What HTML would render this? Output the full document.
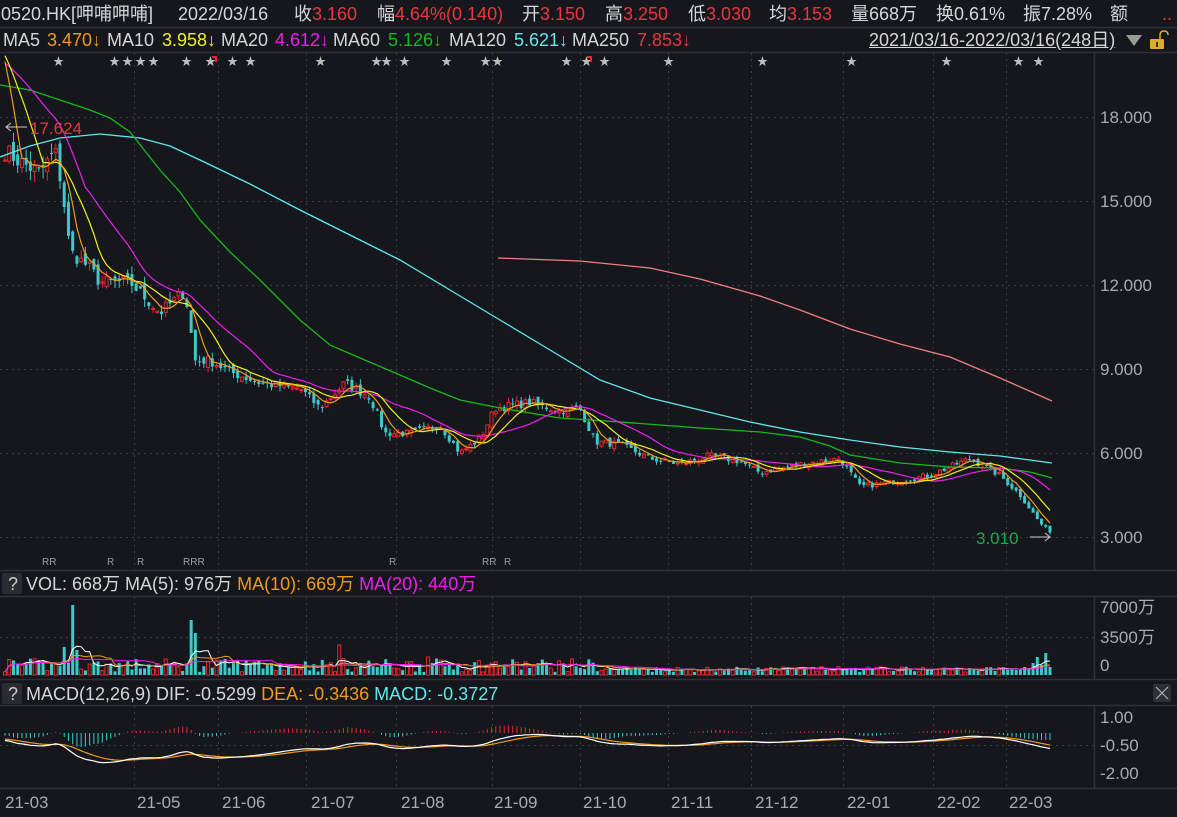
<!DOCTYPE html>
<html><head><meta charset="utf-8"><style>
body{margin:0;background:#15171c;width:1177px;height:817px;overflow:hidden;font-family:"Liberation Sans","Noto Sans CJK SC",sans-serif;}
.t{position:absolute;font-size:18px;color:#d6d6d6;white-space:nowrap;line-height:22px}
.r{color:#e8383d}
svg{position:absolute;left:0;top:0}
</style></head><body>
<svg id="s" width="1177" height="817" xmlns="http://www.w3.org/2000/svg">
<g stroke="#2e3138" stroke-width="1.5" fill="none">
<line x1="0" y1="27.5" x2="1177" y2="27.5"/>
<line x1="0" y1="52.5" x2="1177" y2="52.5"/>
<line x1="0" y1="570.5" x2="1177" y2="570.5"/>
<line x1="0" y1="596.5" x2="1177" y2="596.5"/>
<line x1="0" y1="679.5" x2="1177" y2="679.5"/>
<line x1="0" y1="705.5" x2="1177" y2="705.5"/>
<line x1="0" y1="788.5" x2="1177" y2="788.5"/>
<line x1="1094.5" y1="52" x2="1094.5" y2="570"/>
<line x1="1094.5" y1="596" x2="1094.5" y2="679"/>
<line x1="1094.5" y1="705" x2="1094.5" y2="788"/>
</g>
<g id="grid" stroke="#3a3d45" stroke-width="1" stroke-dasharray="2,4"></g>
<g id="cs"></g>
<g fill="none" stroke-width="1.3">
<polyline stroke="#f08080" points="498,258 580,261 650,268 700,279 760,296 800,310 850,329 900,344 950,357 1000,378 1052,401"/>
<polyline stroke="#5fe8ec" points="0,157 30,146 60,138 100,134 140,138 170,146 200,160 250,184 300,210 350,235 400,260 450,290 500,320 550,350 600,380 650,398 700,410 750,422 800,432 850,440 900,447 950,452 1000,456 1052,463"/>
<polyline stroke="#19b81c" points="0,85 30,90 60,100 90,110 110,118 130,132 160,170 180,192 200,220 230,252 260,280 300,320 330,345 360,358 400,375 430,388 460,400 500,408 560,418 620,422 700,428 760,432 800,437 830,446 850,455 900,463 950,467 1000,468 1030,472 1052,478"/>
</g>
<g id="ma"></g>
<line x1="6" y1="127" x2="27" y2="127" stroke="#ccc"/><path d="M11,123 L6,127 L11,131" stroke="#ccc" fill="none"/>
<text x="30" y="134" fill="#e8383d" font-size="17" font-family="Liberation Sans">17.624</text>
<text x="976" y="544" fill="#1fa84a" font-size="17" font-family="Liberation Sans">3.010</text>
<line x1="1030" y1="537" x2="1050" y2="537" stroke="#ccc"/><path d="M1045,533 L1050,537 L1045,541" stroke="#ccc" fill="none"/>
<g fill="#a9abb2" font-size="17" font-family="Liberation Sans">
<text x="1100" y="123">18.000</text><text x="1100" y="207">15.000</text><text x="1100" y="291">12.000</text><text x="1100" y="375">9.000</text><text x="1100" y="459">6.000</text><text x="1100" y="543">3.000</text>
<text x="1100" y="613">7000万</text><text x="1100" y="643">3500万</text><text x="1100" y="671">0</text>
<text x="1100" y="723">1.00</text><text x="1100" y="751">-0.50</text><text x="1100" y="779">-2.00</text>
<text x="5" y="808">21-03</text><text x="137" y="808">21-05</text><text x="222" y="808">21-06</text><text x="311" y="808">21-07</text><text x="401" y="808">21-08</text><text x="494" y="808">21-09</text><text x="583" y="808">21-10</text><text x="671" y="808">21-11</text><text x="755" y="808">21-12</text><text x="847" y="808">22-01</text><text x="937" y="808">22-02</text><text x="1009" y="808">22-03</text>
</g>
<g id="stars" fill="#bdbdbd" font-size="11"></g>
<g fill="#9a9ca3" font-size="10" font-family="Liberation Sans">
<text x="42" y="565">RR</text><text x="107" y="565">R</text><text x="137" y="565">R</text><text x="183" y="565">RRR</text><text x="389" y="565">R</text><text x="482" y="565">RR</text><text x="504" y="565">R</text></g>
<rect x="2" y="573" width="20" height="21" rx="2" fill="#2a2c33"/>
<rect x="2" y="683" width="20" height="21" rx="2" fill="#2a2c33"/>
<rect x="1153" y="684" width="18" height="18" rx="2" fill="#2e3037"/>
<path d="M1156,687 L1168,699 M1168,687 L1156,699" stroke="#bbb" stroke-width="1"/>
<path d="M1126,35 L1142,35 L1134,46 Z" fill="#9a9a9a"/>
<rect x="1150" y="39" width="14" height="10" rx="1" fill="#e0a92a"/>
<path d="M1160,39 L1160,35 Q1160,31 1164,31 Q1168,31 1168,35" stroke="#e0a92a" stroke-width="1.5" fill="none"/>
<rect x="1156" y="42" width="2" height="5" fill="#333"/>
</svg>
<div class="t" style="left:1px;top:3px">0520.HK[呷哺呷哺]</div>
<div class="t" style="left:178px;top:3px">2022/03/16</div>
<div class="t" style="left:294px;top:3px">收<span class="r">3.160</span></div>
<div class="t" style="left:377px;top:3px">幅<span class="r">4.64%(0.140)</span></div>
<div class="t" style="left:522px;top:3px">开<span class="r">3.150</span></div>
<div class="t" style="left:605px;top:3px">高<span class="r">3.250</span></div>
<div class="t" style="left:688px;top:3px">低<span class="r">3.030</span></div>
<div class="t" style="left:769px;top:3px">均<span class="r">3.153</span></div>
<div class="t" style="left:851px;top:3px">量668万</div>
<div class="t" style="left:936px;top:3px">换0.61%</div>
<div class="t" style="left:1023px;top:3px">振7.28%</div>
<div class="t" style="left:1110px;top:3px">额</div>
<div class="t" style="left:1162px;top:3px;color:#e8383d">..</div>
<div class="t" style="left:3px;top:29px">MA5</div><div class="t" style="left:47px;top:29px;color:#f29a1a">3.470↓</div>
<div class="t" style="left:107px;top:29px">MA10</div><div class="t" style="left:162px;top:29px;color:#f2f21a">3.958↓</div>
<div class="t" style="left:221px;top:29px">MA20</div><div class="t" style="left:275px;top:29px;color:#f01ef0">4.612↓</div>
<div class="t" style="left:333px;top:29px">MA60</div><div class="t" style="left:388px;top:29px;color:#19b81c">5.126↓</div>
<div class="t" style="left:449px;top:29px">MA120</div><div class="t" style="left:514px;top:29px;color:#5fe8ec">5.621↓</div>
<div class="t" style="left:572px;top:29px">MA250</div><div class="t" style="left:637px;top:29px" ><span class="r">7.853↓</span></div>
<div class="t" style="left:869px;top:29px;text-decoration:underline">2021/03/16-2022/03/16(248日)</div>
<div class="t" style="left:8px;top:573px;color:#ccc">?</div>
<div class="t" style="left:26px;top:573px">VOL: 668万 MA(5): 976万 <span style="color:#f29a1a">MA(10): 669万</span> <span style="color:#f01ef0">MA(20): 440万</span></div>
<div class="t" style="left:8px;top:683px;color:#ccc">?</div>
<div class="t" style="left:26px;top:683px">MACD(12,26,9) DIF: -0.5299 <span style="color:#f29a1a">DEA: -0.3436</span> <span style="color:#5fe8ec">MACD: -0.3727</span></div>
<script>
var NS="http://www.w3.org/2000/svg";
function el(p,t,a){var e=document.createElementNS(NS,t);for(var k in a)e.setAttribute(k,a[k]);p.appendChild(e);return e;}
var g=document.getElementById('grid');
[117,201,285,369,453,537].forEach(function(y){el(g,'line',{x1:0,y1:y+.5,x2:1094,y2:y+.5});});
el(g,'line',{x1:0,y1:637.5,x2:1094,y2:637.5});el(g,'line',{x1:0,y1:745.5,x2:1094,y2:745.5});
[134,218,306,396,492,580,668,751,843,933,1006].forEach(function(x){[[53,570],[597,679],[706,788]].forEach(function(r){el(g,'line',{x1:x+.5,y1:r[0],x2:x+.5,y2:r[1]});});});
var seed=7;function rnd(){seed=(seed*16807)%2147483647;return seed/2147483647;}
var kp=[[5,16.8],[20,16.4],[40,16.0],[55,16.8],[62,15.5],[70,13.2],[90,12.6],[100,12.1],[130,12.1],[160,11.0],[185,11.8],[195,9.3],[210,9.3],[230,8.9],[260,8.5],[300,8.3],[320,7.6],[345,8.5],[370,8.0],[385,6.7],[410,6.7],[440,7.0],[460,6.0],[480,6.5],[495,7.6],[530,7.8],[560,7.5],[580,7.6],[595,6.4],[620,6.3],[650,5.8],[680,5.6],[710,5.9],[740,5.7],[760,5.3],[800,5.6],[840,5.8],[860,4.8],[900,5.0],[930,5.2],[970,5.8],[1000,5.2],[1020,4.5],[1040,3.5],[1050,3.16]];
function at(x){for(var i=1;i<kp.length;i++){if(x<=kp[i][0]){var a=kp[i-1],b=kp[i];return a[1]+(b[1]-a[1])*(x-a[0])/(b[0]-a[0]);}}return kp[kp.length-1][1];}
var N=248,cl=[],xs=[];
var pre=[];for(var i=0;i<40;i++)pre.push(21-i*0.1);
for(var i=0;i<N;i++){var x=5+i*(1045/247);xs.push(x);var p=at(x);cl.push(p*(1+(rnd()-.5)*0.04));}
cl[N-1]=3.16;
function Y(p){return 537-(p-3)*28;}
var cs=document.getElementById('cs');
var vols=[];
for(var i=0;i<N;i++){var c=cl[i],o=(i?cl[i-1]:c)*(1+(rnd()-.5)*0.03);var up=c>=o;
var hi=Math.max(o,c)*(1+rnd()*0.025),lo=Math.min(o,c)*(1-rnd()*0.025);
var col=up?'#e8282e':'#3ec9c9';var x=xs[i];
el(cs,'line',{x1:x,y1:Y(hi),x2:x,y2:Y(lo),stroke:col,'stroke-width':1});
var yt=Y(Math.max(o,c)),yb=Y(Math.min(o,c));var h=Math.max(1,yb-yt);
if(up)el(cs,'rect',{x:x-1.5,y:yt,width:3,height:h,fill:'#15171c',stroke:col,'stroke-width':1});
else el(cs,'rect',{x:x-1.5,y:yt,width:3,height:h,fill:col});
var v=3+rnd()*9*(x<600?1.5:0.6);var spk={16:70,17:25,44:55,45:42,14:28,79:30,60:14,100:18};if(spk[i])v=spk[i];if(i>=240)v=[5,8,6,12,18,10,22,8][i-240]||v;
vols.push(v);
if(up)el(cs,'rect',{x:x-1.5,y:675-v,width:3,height:v,fill:'#15171c',stroke:col,'stroke-width':1});
else el(cs,'rect',{x:x-1.5,y:675-v,width:3,height:v,fill:col});}
var all=pre.slice().reverse().concat(cl);var off=pre.length;
function ma(arr,n,i){var s=0,c=0;for(var k=Math.max(0,i-n+1);k<=i;k++){s+=arr[k];c++;}return s/c;}
var mg=document.getElementById('ma');
[[20,'#f01ef0'],[10,'#f2f21a'],[5,'#f29a1a']].forEach(function(m){var pts=[];for(var i=0;i<N;i++)pts.push(xs[i].toFixed(1)+','+Y(ma(all,m[0],i+off)).toFixed(1));el(mg,'polyline',{points:pts.join(' '),fill:'none',stroke:m[1],'stroke-width':1.2});});
[[5,'#ffffff'],[10,'#f29a1a'],[20,'#f01ef0']].forEach(function(m){var pts=[];for(var i=0;i<N;i++)pts.push(xs[i].toFixed(1)+','+(675-ma(vols,m[0],i)).toFixed(1));el(mg,'polyline',{points:pts.join(' '),fill:'none',stroke:m[1],'stroke-width':1});});
var mall=[];for(var i=0;i<80;i++)mall.push(17.6);mall=mall.concat(cl);var moff=80;
var e12=mall[0],e26=mall[0],dea=0,dif=[],de=[];
for(var i=0;i<mall.length;i++){e12=e12+(mall[i]-e12)*2/13;e26=e26+(mall[i]-e26)*2/27;var d=e12-e26;dea=dea+(d-dea)*2/10;if(i>=moff){dif.push(d-0.15);de.push(dea-0.15);}}
function MY(v){return 736-v*18.7;}
var pd=[],pe=[];
for(var i=0;i<N;i++){var h=(dif[i]-de[i])*2;var y0=733,y1=733-h*18.7;
el(mg,'line',{x1:xs[i],y1:y0,x2:xs[i],y2:y1,stroke:h>=0?'#e8282e':'#3ec9c9','stroke-width':1});
pd.push(xs[i].toFixed(1)+','+MY(dif[i]).toFixed(1));pe.push(xs[i].toFixed(1)+','+MY(de[i]).toFixed(1));}
el(mg,'polyline',{points:pe.join(' '),fill:'none',stroke:'#f29a1a','stroke-width':1.2});
el(mg,'polyline',{points:pd.join(' '),fill:'none',stroke:'#ffffff','stroke-width':1.2});
var st=document.getElementById('stars');
[58,114,127,140,153,186,210,232,250,320,376,386,404,446,485,497,566,586,604,668,762,851,946,1018,1038].forEach(function(x){var t=el(st,'text',{x:x-5,y:65});t.textContent='★';});
[213,588].forEach(function(x){el(st,'path',{d:'M'+(x-1)+',56 h5 v6 h-2 v-4 h-3z',fill:'#e8282e'});});
</script>
</body></html>
